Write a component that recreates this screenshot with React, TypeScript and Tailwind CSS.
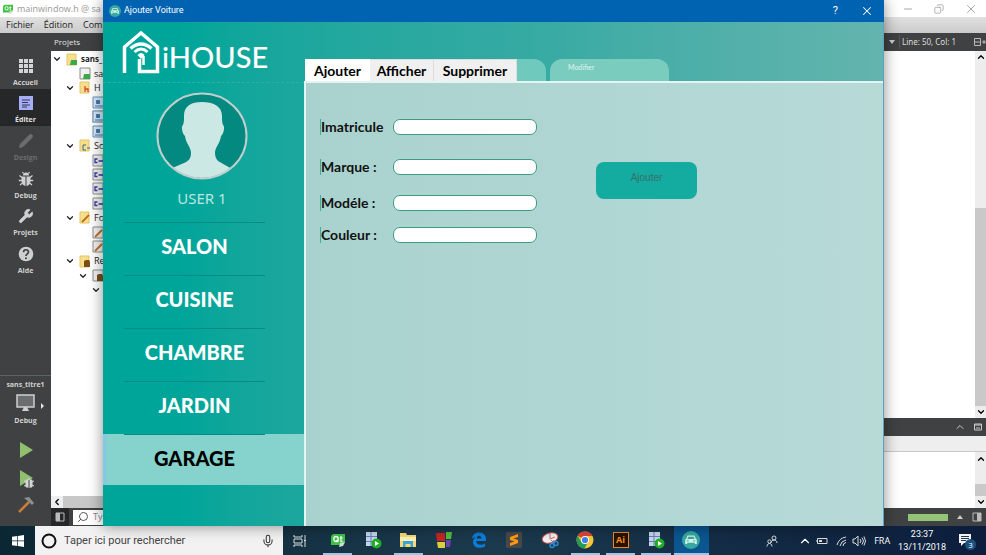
import React from 'react';
import { ChevronDown, ChevronLeft, ChevronUp, Minus, Mic, Wrench, X, Pencil, Search, Copy } from 'lucide-react';

type IconProps = { className?: string };

const BugIcon = ({ className = '' }: IconProps) => (
  <svg viewBox="0 0 16 16" className={className} fill="currentColor" stroke="currentColor" aria-hidden="true">
    <path d="M5 4.500a3 3 0 0 1 6 0z" stroke="none" />
    <path d="M3.500 5.500h4V15C4.500 14.500 3.500 12 3.500 9zM8.500 5.500h4V9c0 3-1 5.500-4 6z" stroke="none" />
    <path d="M4 6.500 1.500 4.500M12 6.500l2.500-2M4 9.500H.8M12 9.500h3.200M4.500 12 2 14M11.500 12l2.500 2M5.500 2.500 4.500 1M10.500 2.500l1-1.500" strokeWidth="1.300" fill="none" />
  </svg>
);

const GridIcon = () => (
  <svg viewBox="0 0 16 16" className="size-4" fill="#d5d5d5" aria-hidden="true">
    {[1, 6, 11].map((y) => [1, 6, 11].map((x) => <rect key={`${x}-${y}`} x={x} y={y} width="4" height="4" />))}
  </svg>
);

const EditIcon = () => (
  <svg viewBox="0 0 16 16" className="size-4" aria-hidden="true">
    <rect x="1" y="1" width="14" height="14" fill="#a5aef2" />
    <path d="M4 5h8M4 7.500h6M4 10h8M4 12h5" stroke="#34375c" strokeWidth="1.200" />
  </svg>
);

const HelpIcon = () => (
  <svg viewBox="0 0 16 16" className="size-4" aria-hidden="true">
    <circle cx="8" cy="8" r="7.300" fill="#cfcfcf" />
    <path d="M5.500 6.200c0-3.300 5-3.200 5-.2C10.500 8 8 7.800 8 10" fill="none" stroke="#404142" strokeWidth="1.700" />
    <circle cx="8" cy="12.200" r="1" fill="#404142" />
  </svg>
);

const CarBadge = ({ className = '' }: IconProps) => (
  <svg viewBox="0 0 18 18" className={className} aria-hidden="true">
    <circle cx="9" cy="9" r="9" fill="#35a99f" />
    <path d="M5.500 4.500h7l1.300 3.300 1 1V13h-2v-1.200H5.200V13h-2V8.800l1-1zM6.300 5.700l-.9 2.300h7.200l-.9-2.300z" fill="#d4f1ec" fillRule="evenodd" />
    <path d="M4.800 9.900h2M11.200 9.900h2" stroke="#35a99f" />
  </svg>
);

const QtIcon = ({ className = '' }: IconProps) => (
  <svg viewBox="0 0 16 14" className={className} aria-hidden="true">
    <path d="M3 1h12v8l-3 3H1V3z" fill="#3ec246" />
    <ellipse cx="6" cy="6" rx="2.200" ry="2.500" fill="none" stroke="#fff" strokeWidth="1.300" />
    <path d="m6.500 7 1.800 2M11 3v5.500h1.500M9.800 5h3" fill="none" stroke="#fff" strokeWidth="1.200" />
    <path d="m9 14 1-4 5-1-2 4z" fill="#d5d9d3" />
  </svg>
);

const PlayServer = () => (
  <svg viewBox="0 0 18 18" className="size-[18px]" aria-hidden="true">
    <path d="M2 1h11v14H2z" fill="#c6d5ee" />
    <path d="M2 5.500h11M2 10.500h11M7 1v14" stroke="#6681b3" />
    <circle cx="12.500" cy="12.500" r="5" fill="#22ae25" />
    <path d="m11 10 4 2.500-4 2.500z" fill="#fff" />
  </svg>
);

const HouseMark = () => (
  <svg viewBox="0 0 40 44" className="h-11 w-10 shrink-0" fill="none" stroke="#fff" aria-hidden="true">
    <path d="M2.500 43V17L19 3l16.500 14v24.500H17.500V29" strokeWidth="3.500" />
    <path d="M21.500 26v9" strokeWidth="2.500" />
    <path d="M8.500 18.500q10.500-9 21 0" strokeWidth="3.500" />
    <path d="M12.500 22q6.500-6 13 0" strokeWidth="3" />
    <path d="M15.500 25q3.500-4 7 0l-3.500 4z" fill="#fff" stroke="none" />
  </svg>
);

const Avatar = () => (
  <svg viewBox="0 0 92 88" className="h-[88px] w-[92px]" role="img" aria-label="Photo de profil">
    <defs>
      <clipPath id="face"><ellipse cx="46" cy="44" rx="44" ry="42" /></clipPath>
    </defs>
    <ellipse cx="46" cy="44" rx="44.500" ry="42.500" fill="#03897f" />
    <path
      clipPath="url(#face)"
      d="M28 24C28 14 35 10 46 10s20 4 20 14c0 4 0 6 1 9 2 1 1 9-2 11-1 8-6 11-6 17 0 3 1 6 3 8l14 8 8 4v13H6V81l8-4 14-6c5-2 7-5 7-10 0-6-5-9-6-17-3-2-4-10-2-11 1-3 1-5 1-9z"
      fill="#cce8e4"
    />
    <ellipse cx="46" cy="44" rx="44.500" ry="42.500" fill="none" stroke="#c0cfcd" strokeWidth="2" />
  </svg>
);

const modes = [
  { label: 'Accueil', icon: <GridIcon />, look: 'text-[#d0d0d0]' },
  { label: 'Éditer', icon: <EditIcon />, look: 'bg-[#262728] text-[#e0e0e0]' },
  { label: 'Design', icon: <Pencil className="size-4 fill-current" strokeWidth={1} />, look: 'text-[#6c6d6e]' },
  { label: 'Debug', icon: <BugIcon className="size-4" />, look: 'text-[#d0d0d0]' },
  { label: 'Projets', icon: <Wrench className="size-4 fill-current" strokeWidth={1} />, look: 'text-[#d0d0d0]' },
  { label: 'Aide', icon: <HelpIcon />, look: 'text-[#d0d0d0]' },
];

function ModeRail() {
  return (
    <nav aria-label="Modes" className="flex w-[51px] shrink-0 flex-col bg-[#404142] pt-[18px] text-[7px] font-bold text-[#d0d0d0]">
      <div className="grid h-[226px] shrink-0 auto-rows-fr">
        {modes.map((m) => (
          <button key={m.label} className={`flex flex-col items-center justify-end gap-1 pb-px leading-[10px] ${m.look}`}>
            {m.icon}
            <span>{m.label}</span>
          </button>
        ))}
      </div>
      <div className="mt-auto flex flex-col items-center border-t border-[#606162] pt-1">
        <span className="text-[7px] leading-[10px]">sans_titre1</span>
        <button className="mt-1 flex w-full flex-col items-center gap-1 leading-[10px]">
          <svg viewBox="0 0 38 18" className="h-[18px] w-[38px]" aria-hidden="true">
            <path d="M10 1h17v12H10z" fill="#6c6d6e" stroke="#cfcfcf" strokeWidth="1.500" />
            <path d="M17 13h3l2 4h-7z" fill="#cfcfcf" />
            <path d="m37 12-3-3v6z" fill="#e5e5e5" />
          </svg>
          <span>Debug</span>
        </button>
        <button aria-label="Exécuter" className="mt-4">
          <svg viewBox="0 0 16 16" className="size-4"><path d="M2 0v16l13-8z" fill="#90c070" /></svg>
        </button>
        <button aria-label="Déboguer" className="mt-3 flex">
          <svg viewBox="0 0 16 18" className="h-[18px] w-4">
            <path d="M2 0v16l13-8z" fill="#90c070" />
            <path d="M8 10h6v7H8zM6 11l10 5M16 11 6 16M11 8v2" fill="#d5d5d5" stroke="#d5d5d5" />
            <path d="M11 10v7" stroke="#404142" />
          </svg>
        </button>
        <button aria-label="Compiler" className="mt-2 mb-3">
          <svg viewBox="0 0 18 18" className="size-[18px]">
            <path d="M2 16 12 6" stroke="#cb7d35" strokeWidth="2.500" />
            <path d="m7 2 5-1 5 6-2 2-4-4z" fill="#8e8f91" />
          </svg>
        </button>
      </div>
    </nav>
  );
}

type TreeKind = 'qt' | 'pro' | 'h' | 'cpp' | 'ui' | 'res' | 'hfile' | 'cppfile' | 'uifile' | 'resfile' | 'none';

function TreeIcon({ kind }: { kind: TreeKind }) {
  if (kind === 'none') return null;
  const folder = ['qt', 'h', 'cpp', 'ui', 'res'].includes(kind);
  return (
    <svg viewBox="0 0 12 13" className="h-[13px] w-3 shrink-0" aria-hidden="true">
      {folder ? (
        <path d="M1 1h9v11H1z" fill="#f8df8b" stroke="#e3c566" />
      ) : kind === 'hfile' ? (
        <path d="M1 1h12v11H1z" fill="#d5e6f5" stroke="#6593bb" />
      ) : (
        <path d="M1 1h10v11H1z" fill="#f1f1f1" stroke="#8d8d8d" />
      )}
      {(kind === 'qt' || kind === 'pro') && <path d="M5 7h6v5H4z" fill="#3da84a" />}
      {kind === 'h' && <path d="M6 5v6M6 8h3v3" fill="none" stroke="#df472d" strokeWidth="1.300" />}
      {kind === 'cpp' && <path d="M7 6H4v5h3M8 9h3" fill="none" stroke="#34689a" />}
      {kind === 'hfile' && <path d="M3 10h9M4.500 4.500h3v3h-3z" fill="#4078ad" stroke="#4078ad" />}
      {kind === 'cppfile' && <path d="M5.500 5H3v3.500h2.500M6.500 7H12" fill="none" stroke="#3434a4" strokeWidth="1.300" />}
      {(kind === 'ui' || kind === 'uifile') && <path d="m3 11 7-7" stroke="#c26c23" strokeWidth="1.800" />}
      {(kind === 'res' || kind === 'resfile') && <path d="M5 6l2-1h3l1 2v5H5z" fill="#7c4e18" />}
    </svg>
  );
}

const tree: { pad: string; open: boolean; kind: TreeKind; name: string; bold?: boolean; on?: boolean }[] = [
  { pad: 'pl-px', open: true, kind: 'qt', name: 'sans_', bold: true },
  { pad: 'pl-[14px]', open: false, kind: 'pro', name: 'sa' },
  { pad: 'pl-[14px]', open: true, kind: 'h', name: 'H' },
  { pad: 'pl-[27px]', open: false, kind: 'hfile', name: '' },
  { pad: 'pl-[27px]', open: false, kind: 'hfile', name: '', on: true },
  { pad: 'pl-[27px]', open: false, kind: 'hfile', name: '' },
  { pad: 'pl-[14px]', open: true, kind: 'cpp', name: 'So' },
  { pad: 'pl-[27px]', open: false, kind: 'cppfile', name: '' },
  { pad: 'pl-[27px]', open: false, kind: 'cppfile', name: '' },
  { pad: 'pl-[27px]', open: false, kind: 'cppfile', name: '' },
  { pad: 'pl-[27px]', open: false, kind: 'cppfile', name: '' },
  { pad: 'pl-[14px]', open: true, kind: 'ui', name: 'Fo' },
  { pad: 'pl-[27px]', open: false, kind: 'uifile', name: '' },
  { pad: 'pl-[27px]', open: false, kind: 'uifile', name: '' },
  { pad: 'pl-[14px]', open: true, kind: 'res', name: 'Re' },
  { pad: 'pl-[27px]', open: true, kind: 'resfile', name: '' },
  { pad: 'pl-10', open: true, kind: 'none', name: '' },
];

function ProjectPane() {
  return (
    <section aria-label="Projets" className="flex w-[120px] shrink-0 flex-col">
      <h2 className="h-[18px] bg-[#404142] px-[3px] text-[8px] leading-[18px] text-[#e5e5e5]">Projets</h2>
      <ul className="mt-px flex h-[245px] flex-col justify-between text-[9px] text-[#222]">
        {tree.map((n, i) => (
          <li key={i} className={`flex h-[14px] items-center overflow-hidden ${n.pad}`}>
            <span className="flex w-[14px] shrink-0">{n.open && <ChevronDown className="size-[10px]" strokeWidth={3} />}</span>
            <span className={`flex shrink-0 items-center gap-[3px] ${n.on ? 'bg-[#d5d5d5]' : ''}`}>
              <TreeIcon kind={n.kind} />
              <span className={n.bold ? 'text-[8px] font-bold' : ''}>{n.name}</span>
            </span>
          </li>
        ))}
      </ul>
      <div className="mt-auto flex h-3 items-center bg-[#c8c8c8]">
        <span className="flex h-full w-3 items-center justify-center bg-[#eee]"><ChevronLeft className="size-[10px]" strokeWidth={3} /></span>
      </div>
    </section>
  );
}

function EditorPane() {
  return (
    <section aria-label="Éditeur" className="flex min-w-0 flex-1 flex-col items-stretch">
      <div className="flex h-[18px] items-center justify-end gap-1 bg-[#404142] text-[9px] text-[#dedede]">
        <svg viewBox="0 0 6 4" className="h-1 w-[6px]" aria-hidden="true"><path d="M0 0h6L3 4z" fill="#ccc" /></svg>
        <span className="w-[70px] border-l border-[#555] pl-[2px] font-['Noto_Sans'] text-[8px] leading-[14px]">Line: 50, Col: 1</span>
        <svg viewBox="0 0 13 10" className="h-[10px] w-[13px]" fill="none" stroke="#bbb" aria-hidden="true">
          <path d="M1.500 1.500h6v7h-6zM1.500 5h6M9 5h4M11 3v4" />
        </svg>
      </div>
      <div className="flex flex-1 justify-end bg-white">
        <div className="flex w-[11px] flex-col items-center bg-[#ededed]">
          <ChevronUp className="my-px size-[10px]" strokeWidth={3} />
          <div className="mt-auto h-[198px] w-full bg-[#c9c9c9]" />
          <ChevronDown className="my-px size-[10px]" strokeWidth={3} />
        </div>
      </div>
      <div className="flex h-[18px] items-center justify-end gap-2 bg-[#404142] pr-1 text-[#ccc]">
        <ChevronUp className="size-3" strokeWidth={2} />
        <svg viewBox="0 0 8 8" className="size-2" fill="none" stroke="#ccc" aria-hidden="true"><path d="M.5 1h7v6h-7zM.5 2h7M2 5h4" /></svg>
      </div>
      <div className="h-4 border-b border-[#c8c8c8] bg-[#eee]" />
      <div className="flex h-14 justify-end bg-white">
        <div className="flex w-[11px] flex-col items-center bg-[#ededed]">
          <ChevronUp className="my-[2px] size-[10px]" strokeWidth={3} />
          <div className="mt-auto h-3 w-full bg-[#c9c9c9]" />
          <ChevronDown className="my-px size-[10px]" strokeWidth={3} />
        </div>
      </div>
    </section>
  );
}

function QtCreator() {
  return (
    <div className="flex h-full flex-col bg-white">
      <header className="flex h-[17px] shrink-0 items-center px-[2px] text-[9px] text-[#999]">
        <QtIcon className="mr-[3px] h-[10px] w-3" />
        <span className="whitespace-nowrap">mainwindow.h @ sa</span>
        <div className="ml-auto flex gap-5 pr-[6px]">
          <button aria-label="Réduire"><Minus className="size-3" strokeWidth={1.75} /></button>
          <button aria-label="Restaurer"><Copy className="size-[10px] -scale-x-100" strokeWidth={1.75} /></button>
          <button aria-label="Fermer la fenêtre"><X className="size-[14px]" strokeWidth={1.5} /></button>
        </div>
      </header>
      <div className="flex h-4 shrink-0 items-center gap-[10px] bg-linear-to-b from-[#e0e0e0] to-[#cbcbcb] px-[6px] text-[9px] text-[#222]">
        <button>Fichier</button>
        <button>Édition</button>
        <button>Comp</button>
      </div>
      <div className="flex min-h-0 flex-1">
        <ModeRail />
        <div className="flex min-w-0 flex-1 flex-col">
          <div className="flex min-h-0 flex-1">
            <ProjectPane />
            <EditorPane />
          </div>
          <footer className="flex h-[18px] items-center bg-[#404142]">
            <svg viewBox="0 0 18 18" className="size-[18px] bg-[#262728]" aria-hidden="true">
              <path d="M5 5h8v8H5z" fill="none" stroke="#bbb" /><path d="M5 5h4v8H5z" fill="#bbb" />
            </svg>
            <label className="ml-1 flex h-[15px] w-40 items-center bg-white pl-1">
              <Search className="mr-1 size-3 -scale-x-100 text-[#555]" />
              <input aria-label="Localiser" placeholder="Ty" className="w-20 text-[9px] placeholder:text-[#888]" />
            </label>
            <div className="ml-auto flex items-center gap-2 pr-1">
              <div className="h-[7px] w-10 bg-[#94c477]" />
              <svg viewBox="0 0 6 4" className="mx-px h-1 w-[6px]" aria-hidden="true"><path d="M0 4h6L3 0z" fill="#ccc" /></svg>
              <svg viewBox="0 0 10 10" className="size-[10px]" aria-hidden="true">
                <path d="M1 1h8v8H1z" fill="none" stroke="#bbb" /><path d="M5 1h4v8H5z" fill="#bbb" />
              </svg>
            </div>
          </footer>
        </div>
      </div>
    </div>
  );
}

const rooms = ['SALON', 'CUISINE', 'CHAMBRE', 'JARDIN', 'GARAGE'];

function Sidebar() {
  return (
    <aside className="flex w-[201px] shrink-0 flex-col">
      <div className="flex h-[61px] items-end border-b border-dashed border-[#2bb0a4] pb-2 pl-[19px] text-white">
        <HouseMark />
        <span className="font-['Lato'] text-[29px] leading-[34px] font-medium">iHOUSE</span>
      </div>
      <div className="mt-[9px] flex flex-col items-center pr-[3px]">
        <Avatar />
        <p className="mt-2 mb-[14px] font-['Noto_Sans'] text-[15px] leading-5 text-[#b9e6e1]">USER 1</p>
      </div>
      <nav aria-label="Pièces">
        {rooms.map((r) => (
          <a
            key={r}
            href={`#${r.toLowerCase()}`}
            className={`flex flex-col items-center font-['Lato'] text-[20px] leading-[24px] font-black ${
              r === 'GARAGE' ? 'h-[51px] border-l-4 border-[#82cbe0] bg-[#86d3cd] pr-[22px] text-black' : 'h-[53px] pr-[18px] text-white'
            }`}
          >
            <span className="mb-[11px] h-px w-[141px] bg-[#078b84]" />
            {r}
          </a>
        ))}
      </nav>
    </aside>
  );
}

const fields = [
  { id: 'imatricule', label: 'Imatricule', space: '' },
  { id: 'marque', label: 'Marque :', space: 'mt-6' },
  { id: 'modele', label: 'Modéle :', space: 'mt-5' },
  { id: 'couleur', label: 'Couleur :', space: 'mt-4' },
];

function Dialog() {
  return (
    <section role="dialog" aria-label="Ajouter Voiture" className="absolute inset-y-0 right-[102px] left-[103px] flex flex-col shadow-[0_0_14px_rgba(0,0,0,0.45)]">
      <header className="flex h-[22px] shrink-0 items-center bg-[#0063b1] pr-[10px] pl-[6px] font-['Roboto'] text-[9px] text-white">
        <CarBadge className="mr-[3px] size-3" />
        <span>Ajouter Voiture</span>
        <button aria-label="Aide" className="ml-auto text-[11px]">?</button>
        <button aria-label="Fermer" className="ml-[22px]"><X className="size-[14px]" strokeWidth={1.75} /></button>
      </header>
      <div className="flex min-h-0 flex-1 border-r border-[#5f9fbf] bg-linear-to-r from-[#00a59a] from-10% via-[#35aaa3] via-55% to-[#63b4ae]">
        <Sidebar />
        <main className="flex min-w-0 flex-1 flex-col pt-[37px] font-['Lato']">
          <div role="tablist" className="flex h-[22px] items-stretch pl-px text-[14px] font-bold text-black">
            <button role="tab" aria-selected="true" className="w-[65px] bg-white">Ajouter</button>
            <button role="tab" aria-selected="false" className="w-16 border-t border-r border-[#ddd] bg-[#f0f0f0]">Afficher</button>
            <button role="tab" aria-selected="false" className="w-[83px] border-t border-r border-[#ddd] bg-[#f0f0f0]">Supprimer</button>
            <span className="w-[29px] rounded-tr-xl bg-[#70c9bd]" />
            <button role="tab" aria-selected="false" className="ml-1 w-[119px] rounded-t-xl bg-[#7accbf] pb-[6px] pl-[18px] text-left text-[7px] font-normal text-[#dff5f1]">Modifier</button>
          </div>
          <div className="flex-1 border-t-2 border-l-2 border-[#e3f4f2] bg-linear-to-r from-[#a9d2cf] to-[#b7dad7] pt-9 pl-[14px]">
            <form className="flex items-start" onSubmit={(e) => e.preventDefault()}>
              <div>
                {fields.map((f) => (
                  <div key={f.id} className={`flex h-4 items-center ${f.space}`}>
                    <label htmlFor={f.id} className="w-[73px] border-l border-[#3fae9d] text-[14px] leading-4 font-bold text-[#111]">{f.label}</label>
                    <input id={f.id} className="h-4 w-36 rounded-[7px] border border-[#3c9b81] bg-white px-2 text-[11px]" />
                  </div>
                ))}
              </div>
              <button className="mt-[43px] ml-[59px] h-[37px] w-[101px] rounded-lg bg-[#14aca1] pb-[6px] font-['Liberation_Sans'] text-[10px] text-[#3b6f69]">Ajouter</button>
            </form>
          </div>
        </main>
      </div>
    </section>
  );
}

const apps: { name: string; icon: React.ReactNode; look: string }[] = [
  { name: 'Qt Creator', look: 'mx-[3px] border-[#9cc6e8]', icon: <QtIcon className="h-[14px] w-4" /> },
  { name: 'Serveur', look: 'mx-[3px] border-transparent', icon: <PlayServer /> },
  {
    name: 'Explorateur', look: 'mx-[3px] border-[#9cc6e8]',
    icon: (
      <svg viewBox="0 0 18 16" className="h-4 w-[18px]"><path d="M1 1h6l1 2h9v12H1z" fill="#f8d775" /><path d="M1 5h16v4H1z" fill="#fff0b5" /><path d="M4 15V9h10v6h-2.500v-3h-5v3z" fill="#38a5db" /></svg>
    ),
  },
  {
    name: 'Code::Blocks', look: 'mx-[3px] border-transparent',
    icon: (
      <svg viewBox="0 0 18 18" className="size-[18px]"><path d="M1 2h9v8H2z" fill="#c72322" /><path d="M11 1h6l-1 7h-5z" fill="#50bd3b" /><path d="M2 11h8v6H3z" fill="#d9cf40" /><path d="M11 9h5l-1 7h-4z" fill="#6a43ac" /></svg>
    ),
  },
  {
    name: 'Edge', look: 'mx-[3px] border-transparent',
    icon: (
      <svg viewBox="0 0 16 16" className="size-4"><path d="M1 7C1.500 2.500 4.500.5 8 .5c5 0 7.500 3.500 7 8.500H5c.5 4.500 6 4.500 9 2.500v3C9 17 2 16 2 10c0-3 2-4.500 3.500-5.500C4 5 2 5.500 1 7zm4.500-.5h5c0-3.500-4.500-4-5 0z" fill="#0b7ddb" fillRule="evenodd" /></svg>
    ),
  },
  {
    name: 'Sublime Text', look: 'mx-[3px] border-transparent',
    icon: (
      <svg viewBox="0 0 18 18" className="size-[18px]"><rect x="1" y="1" width="16" height="16" rx="1" fill="#484848" /><path d="m5 6 8-3v3L8.500 7.500 13 9v3l-8 3v-3l4.500-1.500L5 9z" fill="#ff9a16" /></svg>
    ),
  },
  {
    name: 'Capture', look: 'mx-[3px] border-transparent',
    icon: (
      <svg viewBox="0 0 18 18" className="size-[18px]"><ellipse cx="9" cy="7" rx="8" ry="5" fill="#f3eeee" stroke="#cf5154" transform="rotate(-15 9 7)" /><path d="M9 8V3M9 8l5-2M10 9l3 3M13 9l-2 4" stroke="#b86b70" /><circle cx="11" cy="14.500" r="2" fill="none" stroke="#2b8bd6" strokeWidth="1.500" /><circle cx="15" cy="12.500" r="2" fill="none" stroke="#2b8bd6" strokeWidth="1.500" /></svg>
    ),
  },
  {
    name: 'Chrome', look: 'mx-[3px] border-[#9cc6e8]',
    icon: (
      <svg viewBox="0 0 18 18" className="size-[18px]"><circle cx="9" cy="9" r="8.500" fill="#f6c733" /><path d="M9 9 1.600 4.800A8.500 8.500 0 0 1 16.500 5H9z" fill="#dc4437" /><path d="M1.600 4.800A8.500 8.500 0 0 0 8.500 17.500L12 11 5.500 11z" fill="#269b57" /><circle cx="9" cy="9" r="4" fill="#fff" /><circle cx="9" cy="9" r="3.100" fill="#437fe9" /></svg>
    ),
  },
  {
    name: 'Illustrator', look: 'mx-[3px] border-[#9cc6e8]',
    icon: <span className="flex size-4 items-center justify-center border border-[#e88a2b] bg-[#281303] text-[9px] font-bold text-[#ff8e1d]">Ai</span>,
  },
  { name: 'Serveur local', look: 'mx-[3px] border-[#9cc6e8]', icon: <PlayServer /> },
  { name: 'Ajouter Voiture', look: 'border-[#9cc6e8] bg-[#0b5591]', icon: <CarBadge className="size-[18px]" /> },
];

function Taskbar() {
  return (
    <footer className="flex h-[29px] shrink-0 items-stretch bg-linear-to-r from-[#0b2734] via-[#1b3a4d] to-[#0c1d3c] text-white">
      <button aria-label="Démarrer" className="flex w-[35px] items-center justify-center">
        <svg viewBox="0 0 12 12" className="size-3" fill="#fff"><path d="M0 1.700 5.300 1v4.600H0zM6 .9 12 0v5.600H6zM0 6.300h5.300V11L0 10.300zM6 6.300h6V12l-6-.9z" /></svg>
      </button>
      <label className="flex w-[248px] items-center bg-[#f2f2f2] pl-[6px] text-[#333]">
        <svg viewBox="0 0 16 16" className="size-4 shrink-0" aria-hidden="true"><circle cx="8" cy="8" r="6.500" fill="none" stroke="#111" strokeWidth="2" /></svg>
        <input aria-label="Rechercher" placeholder="Taper ici pour rechercher" className="ml-[7px] h-full w-full min-w-0 font-['Roboto'] text-[11px] placeholder:text-[#444]" />
        <Mic className="mr-2 size-[14px] shrink-0" strokeWidth={1.75} />
      </label>
      <button aria-label="Vue des tâches" className="flex w-[34px] items-center justify-center">
        <svg viewBox="0 0 14 12" className="h-3 w-[14px]" fill="none" stroke="#ddd"><path d="M1 0v2h8V0M1 4h8v4H1zM1 12v-2h8v2M12 0v12M11 5.500h2" /></svg>
      </button>
      <div className="ml-[3px] grid w-[389px] auto-cols-fr grid-flow-col">
        {apps.map((a) => (
          <button key={a.name} aria-label={a.name} className={`flex items-center justify-center border-b-2 ${a.look}`}>{a.icon}</button>
        ))}
      </div>
      <div className="ml-auto flex items-center text-[9px]">
        <svg viewBox="0 0 12 12" className="mr-5 size-3" fill="none" stroke="#ddd" aria-hidden="true"><circle cx="8" cy="3" r="2" /><path d="M5 8c0-4 6-4 6 0" /><circle cx="3.500" cy="6.500" r="1.700" /><path d="M1 11.500c0-4 5-4 5 0" /></svg>
        <ChevronUp className="mr-1 size-[14px]" />
        <svg viewBox="0 0 12 8" className="mr-2 h-2 w-3" aria-hidden="true"><path d="M1.500 1.500H11v5H1.500zM0 3v2" fill="none" stroke="#ddd" /><path d="M3 3h3v2H3z" fill="#ddd" /></svg>
        <svg viewBox="0 0 12 12" className="mr-1 size-3" fill="none" stroke="#ddd" aria-hidden="true"><path d="M1 10Q3 3 10 2M4 11q1-5 6-6M7 11q0-3 3-3.500" /></svg>
        <svg viewBox="0 0 14 12" className="mr-2 h-3 w-[14px]" fill="none" stroke="#ddd" aria-hidden="true"><path d="M1 4h2l3-3v10L3 8H1zM8 4q2 2 0 4M10 2.500q3 3.500 0 7M12 1.500q3 4.500 0 9" /></svg>
        <span className="mr-2">FRA</span>
        <time className="text-center font-['Roboto'] leading-[13px] whitespace-nowrap">23:37<br />13/11/2018</time>
        <button aria-label="Notifications" className="mr-[10px] ml-3">
          <svg viewBox="0 0 18 18" className="size-[18px]">
            <path d="M1 2h12v9H6l-3 3v-3H1z" fill="#f2f2f2" />
            <path d="M3 4.500h8M3 6.500h8M3 8.500h5" stroke="#203850" />
            <circle cx="12.500" cy="12.500" r="5.500" fill="#1c507d" />
            <text x="12.500" y="15.500" fontSize="8" textAnchor="middle" fill="#fff">3</text>
          </svg>
        </button>
      </div>
    </footer>
  );
}

export default function App() {
  return (
    <div className="flex h-screen flex-col overflow-hidden font-['Open_Sans','Noto_Sans',sans-serif]">
      <div className="relative min-h-0 flex-1">
        <QtCreator />
        <Dialog />
      </div>
      <Taskbar />
    </div>
  );
}
